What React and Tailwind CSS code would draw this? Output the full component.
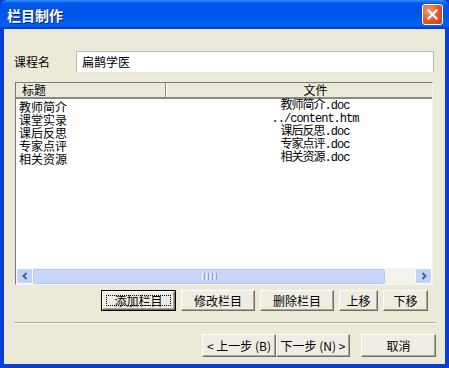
import React from "react";

const cjk = "font-['Noto_Sans_CJK_SC',sans-serif]";
const mono = "font-['Liberation_Mono','Noto_Sans_CJK_SC',monospace]";

const rows = [
  ["教师简介", "教师简介.doc"],
  ["课堂实录", "../content.htm"],
  ["课后反思", "课后反思.doc"],
  ["专家点评", "专家点评.doc"],
  ["相关资源", "相关资源.doc"],
];

// classic 3D face used by every push button
const Face = ({ children, w, h, focus }) => (
  <div
    className={`flex items-center justify-center border border-t-white border-l-white border-b-[#716f64] border-r-[#716f64] bg-[#efede3] shadow-[inset_-1px_-1px_0_#aca899] text-[12px] leading-none text-black ${cjk}`}
    style={{ width: w, height: h }}
  >
    {focus ? (
      <span className="flex h-[calc(100%-6px)] w-[calc(100%-6px)] items-center justify-center border border-dotted border-black">
        {children}
      </span>
    ) : (
      children
    )}
  </div>
);

const DefaultBtn = ({ children, w, h }) => (
  <div className="border border-black">
    <Face w={w - 2} h={h - 2} focus>
      {children}
    </Face>
  </div>
);

const Arrow = ({ dir }) => (
  <div className="flex h-[16px] w-[17px] shrink-0 items-center justify-center rounded-[2px] border border-white bg-[#c1d3fb]">
    <svg width="8" height="8" viewBox="0 0 8 8">
      <path
        d={dir === "left" ? "M5.5 1 L2.5 4 L5.5 7" : "M2.5 1 L5.5 4 L2.5 7"}
        fill="none"
        stroke="#4d6185"
        strokeWidth="2"
      />
    </svg>
  </div>
);

export default function App() {
  return (
    <div className="flex h-[368px] w-[449px] flex-col overflow-hidden bg-[#0a3fd4]">
      {/* title bar */}
      <div className="flex h-[29px] shrink-0 items-center justify-between rounded-t-[7px] bg-[linear-gradient(to_bottom,#3a8cff_0%,#0058ee_12%,#0053e6_45%,#0061f4_85%,#0058ee_92%,#003dd7_96%,#003dd7_100%)] pl-[7px] pr-[6px]">
        <span className={`text-[14px] font-bold leading-none text-white [text-shadow:1px_1px_0_#0a1f6e] ${cjk}`}>
          栏目制作
        </span>
        <div className="flex h-[21px] w-[21px] items-center justify-center rounded-[3px] border border-white bg-[radial-gradient(circle_at_30%_30%,#f49a7c,#e0542f_55%,#c23a17)]">
          <svg width="11" height="11" viewBox="0 0 11 11">
            <path d="M1.5 1.5 L9.5 9.5 M9.5 1.5 L1.5 9.5" stroke="white" strokeWidth="2.2" strokeLinecap="square" />
          </svg>
        </div>
      </div>

      {/* client area */}
      <div className="mx-[4px] mb-[4px] flex flex-1 flex-col bg-[#ece9d8] pl-[10px]">
        <div className="mt-[22px] flex items-center">
          <span className={`w-[62px] text-[12px] leading-none text-black ${cjk}`}>课程名</span>
          <div className="flex h-[22px] w-[358px] items-center border border-[#b4b8bf] border-b-[#e3e3dd] bg-white pl-[5px]">
            <span className={`text-[12px] leading-none text-black ${cjk}`}>扁鹊学医</span>
          </div>
        </div>

        {/* list view */}
        <div className="ml-[1px] mt-[9px] flex h-[203px] w-[418px] flex-col overflow-hidden border border-[#7a7a7a] border-b-[#f5f4ee] border-r-[#f5f4ee] bg-white">
          <div className="flex h-[16px] shrink-0 border-b-2 border-[#8c8a7e] bg-[#ebe9dc]">
            <div className={`flex w-[150px] shrink-0 items-center border-r border-[#8c8a7e] pl-[6px] text-[12px] leading-none ${cjk}`}>
              标题
            </div>
            <div className={`flex w-[298px] shrink-0 items-center justify-center border-l border-white text-[12px] leading-none ${cjk}`}>
              文件
            </div>
          </div>
          <div className="flex flex-1 flex-col pt-[1px]">
            {rows.map(([a, b]) => (
              <div key={a} className="flex shrink-0">
                <span className={`w-[150px] shrink-0 pl-[3px] text-[12px] leading-[13px] text-black ${cjk}`}>{a}</span>
                <span className={`w-[298px] shrink-0 text-center text-[12px] leading-[13px] tracking-[-1px] text-black ${mono}`}>
                  {b}
                </span>
              </div>
            ))}
          </div>
          {/* horizontal scrollbar */}
          <div className="flex h-[16px] shrink-0 items-center bg-[#f3f2ec]">
            <Arrow dir="left" />
            <div className="flex h-[15px] w-[352px] shrink-0 items-center justify-center rounded-[2px] border border-[#b5c8f5] bg-[#c7d6fa]">
              <div className="flex gap-[1px]">
                <span className="h-[7px] w-[1px] bg-[#eef3ff]" />
                <span className="h-[7px] w-[1px] bg-[#8ca4dc]" />
                <span className="h-[7px] w-[1px] bg-[#eef3ff]" />
                <span className="h-[7px] w-[1px] bg-[#8ca4dc]" />
                <span className="h-[7px] w-[1px] bg-[#eef3ff]" />
                <span className="h-[7px] w-[1px] bg-[#8ca4dc]" />
                <span className="h-[7px] w-[1px] bg-[#eef3ff]" />
                <span className="h-[7px] w-[1px] bg-[#8ca4dc]" />
              </div>
            </div>
            <div className="flex-1" />
            <Arrow dir="right" />
          </div>
        </div>

        {/* edit buttons */}
        <div className="ml-[87px] mt-[5px] flex gap-[5px]">
          <DefaultBtn w={75} h={21}>添加栏目</DefaultBtn>
          <Face w={74} h={21}>修改栏目</Face>
          <Face w={74} h={21}>删除栏目</Face>
          <Face w={39} h={21}>上移</Face>
          <Face w={45} h={21}>下移</Face>
        </div>

        <div className="mt-[11px] h-[2px] w-[421px] border-t border-b border-t-[#aca899] border-b-white" />

        {/* wizard buttons */}
        <div className="ml-[188px] mt-[10px] flex">
          <Face w={74} h={23}>&lt; 上一步 (B)</Face>
          <Face w={74} h={23}>下一步 (N) &gt;</Face>
          <div className="ml-[11px]">
            <Face w={75} h={23}>取消</Face>
          </div>
        </div>
      </div>
    </div>
  );
}
